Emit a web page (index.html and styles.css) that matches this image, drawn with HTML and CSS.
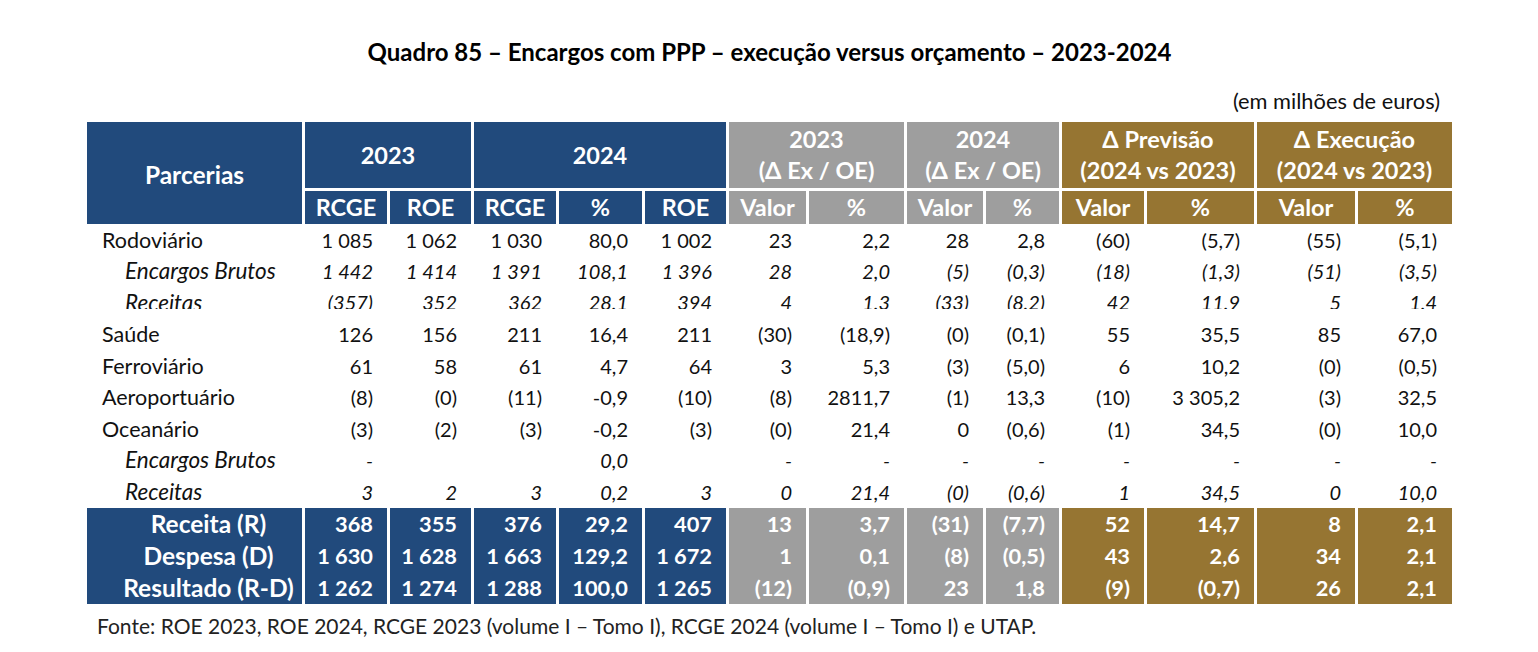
FILE: index.html
```html
<!DOCTYPE html>
<html lang="pt">
<head>
<meta charset="utf-8">
<title>Quadro 85</title>
<link rel="stylesheet" href="styles.css">
</head>
<body>
<div class="page">
  <h1 class="title">Quadro 85 – Encargos com PPP – execução versus orçamento – 2023-2024</h1>
  <div class="unit">(em milhões de euros)</div>

  <div class="table">
    <div class="thead cols">
      <div class="hc blue span-rows">Parcerias</div>
      <div class="hc blue s2">2023</div>
      <div class="hc blue s3">2024</div>
      <div class="hc gray s2 two">2023<br>(Δ Ex / OE)</div>
      <div class="hc gray s2 two">2024<br>(Δ Ex / OE)</div>
      <div class="hc gold s2 two">Δ Previsão<br>(2024 vs 2023)</div>
      <div class="hc gold s2 two">Δ Execução<br>(2024 vs 2023)</div>

      <div class="hc blue">RCGE</div>
      <div class="hc blue">ROE</div>
      <div class="hc blue">RCGE</div>
      <div class="hc blue">%</div>
      <div class="hc blue">ROE</div>
      <div class="hc gray">Valor</div>
      <div class="hc gray">%</div>
      <div class="hc gray">Valor</div>
      <div class="hc gray">%</div>
      <div class="hc gold">Valor</div>
      <div class="hc gold">%</div>
      <div class="hc gold">Valor</div>
      <div class="hc gold">%</div>
    </div>

    <div class="tbody">
      <div class="row cols">
        <div class="lbl">Rodoviário</div>
        <div class="n">1 085</div><div class="n">1 062</div><div class="n">1 030</div><div class="n">80,0</div><div class="n">1 002</div>
        <div class="n">23</div><div class="n">2,2</div><div class="n">28</div><div class="n">2,8</div>
        <div class="n">(60)</div><div class="n">(5,7)</div><div class="n">(55)</div><div class="n last">(5,1)</div>
      </div>
      <div class="row cols sub">
        <div class="lbl">Encargos Brutos</div>
        <div class="n">1 442</div><div class="n">1 414</div><div class="n">1 391</div><div class="n">108,1</div><div class="n">1 396</div>
        <div class="n">28</div><div class="n">2,0</div><div class="n">(5)</div><div class="n">(0,3)</div>
        <div class="n">(18)</div><div class="n">(1,3)</div><div class="n">(51)</div><div class="n last">(3,5)</div>
      </div>
      <div class="row cols sub clipped">
        <div class="lbl"><span class="clip">Receitas</span></div>
        <div class="n"><span class="clip">(357)</span></div><div class="n"><span class="clip">352</span></div><div class="n"><span class="clip">362</span></div><div class="n"><span class="clip">28,1</span></div><div class="n"><span class="clip">394</span></div>
        <div class="n"><span class="clip">4</span></div><div class="n"><span class="clip">1,3</span></div><div class="n"><span class="clip">(33)</span></div><div class="n"><span class="clip">(8,2)</span></div>
        <div class="n"><span class="clip">42</span></div><div class="n"><span class="clip">11,9</span></div><div class="n"><span class="clip">5</span></div><div class="n last"><span class="clip">1,4</span></div>
      </div>
      <div class="row cols">
        <div class="lbl">Saúde</div>
        <div class="n">126</div><div class="n">156</div><div class="n">211</div><div class="n">16,4</div><div class="n">211</div>
        <div class="n">(30)</div><div class="n">(18,9)</div><div class="n">(0)</div><div class="n">(0,1)</div>
        <div class="n">55</div><div class="n">35,5</div><div class="n">85</div><div class="n last">67,0</div>
      </div>
      <div class="row cols">
        <div class="lbl">Ferroviário</div>
        <div class="n">61</div><div class="n">58</div><div class="n">61</div><div class="n">4,7</div><div class="n">64</div>
        <div class="n">3</div><div class="n">5,3</div><div class="n">(3)</div><div class="n">(5,0)</div>
        <div class="n">6</div><div class="n">10,2</div><div class="n">(0)</div><div class="n last">(0,5)</div>
      </div>
      <div class="row cols">
        <div class="lbl">Aeroportuário</div>
        <div class="n">(8)</div><div class="n">(0)</div><div class="n">(11)</div><div class="n">-0,9</div><div class="n">(10)</div>
        <div class="n">(8)</div><div class="n">2811,7</div><div class="n">(1)</div><div class="n">13,3</div>
        <div class="n">(10)</div><div class="n">3 305,2</div><div class="n">(3)</div><div class="n last">32,5</div>
      </div>
      <div class="row cols">
        <div class="lbl">Oceanário</div>
        <div class="n">(3)</div><div class="n">(2)</div><div class="n">(3)</div><div class="n">-0,2</div><div class="n">(3)</div>
        <div class="n">(0)</div><div class="n">21,4</div><div class="n">0</div><div class="n">(0,6)</div>
        <div class="n">(1)</div><div class="n">34,5</div><div class="n">(0)</div><div class="n last">10,0</div>
      </div>
      <div class="row cols sub">
        <div class="lbl">Encargos Brutos</div>
        <div class="n">-</div><div class="n"></div><div class="n"></div><div class="n">0,0</div><div class="n"></div>
        <div class="n">-</div><div class="n">-</div><div class="n">-</div><div class="n">-</div>
        <div class="n">-</div><div class="n">-</div><div class="n">-</div><div class="n last">-</div>
      </div>
      <div class="row cols sub">
        <div class="lbl">Receitas</div>
        <div class="n">3</div><div class="n">2</div><div class="n">3</div><div class="n">0,2</div><div class="n">3</div>
        <div class="n">0</div><div class="n">21,4</div><div class="n">(0)</div><div class="n">(0,6)</div>
        <div class="n">1</div><div class="n">34,5</div><div class="n">0</div><div class="n last">10,0</div>
      </div>
    </div>

    <div class="tfoot">
      <div class="frow cols">
        <div class="flbl blue">Receita (R)</div>
        <div class="n blue">368</div><div class="n blue">355</div><div class="n blue">376</div><div class="n blue">29,2</div><div class="n blue">407</div>
        <div class="n gray">13</div><div class="n gray">3,7</div><div class="n gray">(31)</div><div class="n gray">(7,7)</div>
        <div class="n gold">52</div><div class="n gold">14,7</div><div class="n gold">8</div><div class="n gold last">2,1</div>
      </div>
      <div class="frow cols">
        <div class="flbl blue">Despesa (D)</div>
        <div class="n blue">1 630</div><div class="n blue">1 628</div><div class="n blue">1 663</div><div class="n blue">129,2</div><div class="n blue">1 672</div>
        <div class="n gray">1</div><div class="n gray">0,1</div><div class="n gray">(8)</div><div class="n gray">(0,5)</div>
        <div class="n gold">43</div><div class="n gold">2,6</div><div class="n gold">34</div><div class="n gold last">2,1</div>
      </div>
      <div class="frow cols">
        <div class="flbl blue">Resultado (R-D)</div>
        <div class="n blue">1 262</div><div class="n blue">1 274</div><div class="n blue">1 288</div><div class="n blue">100,0</div><div class="n blue">1 265</div>
        <div class="n gray">(12)</div><div class="n gray">(0,9)</div><div class="n gray">23</div><div class="n gray">1,8</div>
        <div class="n gold">(9)</div><div class="n gold">(0,7)</div><div class="n gold">26</div><div class="n gold last">2,1</div>
      </div>
    </div>
  </div>

  <p class="source">Fonte: ROE 2023, ROE 2024, RCGE 2023 (volume I – Tomo I), RCGE 2024 (volume I – Tomo I) e UTAP.</p>
</div>
</body>
</html>
```

FILE: styles.css
```css
html, body {
  margin: 0;
  padding: 0;
  background: #ffffff;
}

body {
  font-family: Lato, "Open Sans", "DejaVu Sans", sans-serif;
  font-size: 20px;
  color: #111111;
}

.page {
  width: 1365px;
  padding-left: 87px;
}

.title {
  margin: 38px 0 0 0;
  font-size: 24px;
  line-height: 28px;
  font-weight: 700;
  text-align: center;
  color: #000000;
}

.unit {
  margin-top: 22px;
  font-size: 21.8px;
  line-height: 26px;
  text-align: right;
  padding-right: 12px;
  color: #111111;
}

.table {
  margin-top: 8px;
}

.cols {
  display: grid;
  grid-template-columns: 215px 82px 81px 82px 83px 81px 77px 95px 76px 73px 82px 107px 98px 94px;
  column-gap: 3px;
}

.thead {
  grid-template-rows: 66px 33px;
  row-gap: 3px;
}

.hc {
  display: flex;
  align-items: center;
  justify-content: center;
  text-align: center;
  color: #ffffff;
  font-weight: 700;
  font-size: 23.5px;
  line-height: 31px;
}

.span-rows {
  grid-row: span 2;
  padding-top: 2px;
  font-size: 24.5px;
}

.s2 { grid-column: span 2; }
.s3 { grid-column: span 3; }

.blue { background: #214a7c; }
.gray { background: #9e9e9e; }
.gold { background: #967532; }

.row {
  height: 31.5px;
}

.row > div {
  display: flex;
  align-items: center;
  line-height: 24px;
}

.lbl {
  padding-left: 15px;
  font-size: 21.5px;
}

.sub {
  font-style: italic;
}

.sub .lbl {
  padding-left: 38px;
  font-size: 22.5px;
}

.n {
  justify-content: flex-end;
  padding-right: 14px;
}

.n.last {
  padding-right: 15px;
}

.clipped > div {
  align-items: flex-start;
}

.clip {
  display: block;
  height: 22px;
  line-height: 31.5px;
  overflow: hidden;
}

.frow {
  height: 32px;
}

.frow > div {
  display: flex;
  align-items: center;
  color: #ffffff;
  font-weight: 700;
  font-size: 21.8px;
  line-height: 26px;
}

.frow > .flbl {
  justify-content: center;
  padding-left: 28px;
  font-size: 24.5px;
}

.source {
  margin: 9px 0 0 10px;
  font-size: 21px;
  line-height: 26px;
  color: #222222;
}
```
